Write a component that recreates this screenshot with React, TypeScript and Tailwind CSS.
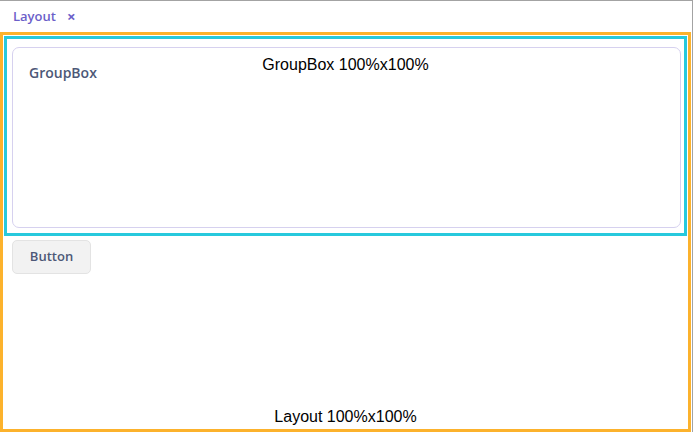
import React from "react";

export default function App() {
  return (
    <div className="w-[693px] h-[432px] bg-white border-t border-r border-[#a3a3a3] overflow-hidden" style={{ fontFamily: '"Open Sans", "Liberation Sans", sans-serif' }}>
      <div className="h-[31px] flex items-center pl-[13px] text-[13px] font-semibold text-[#6c5fc9]">
        <span>Layout</span>
        <span className="ml-[11px] text-[15px] leading-none font-bold">×</span>
      </div>
      <div className="relative w-[691px] h-[400px] border-[3px] border-[#fcb22c] p-[1px] flex flex-col">
        <div className="relative h-[200px] border-[3px] border-[#27c9dd] pt-[8px] pl-[5px] pr-[3px] pb-[5px] flex">
          <div className="flex-1 border border-[#d6d1ef] rounded-[7px] pt-[15px] pl-[16px]">
            <div className="text-[14px] font-semibold text-[#4d5877] leading-[20px]">GroupBox</div>
          </div>
          <div
            className="absolute left-0 right-0 top-[17px] text-center text-[16px] leading-[18px] text-black"
            style={{ fontFamily: '"Liberation Sans", Arial, sans-serif' }}
          >
            GroupBox 100%x100%
          </div>
        </div>
        <div className="mt-[4px] ml-[8px]">
          <button className="w-[79px] h-[34px] bg-[#f2f2f2] border border-[#e3e3e3] rounded-[5px] text-[13px] font-semibold text-[#4d5877]">
            Button
          </button>
        </div>
        <div
          className="absolute left-0 right-0 bottom-[3px] text-center text-[16px] leading-[18px] text-black"
          style={{ fontFamily: '"Liberation Sans", Arial, sans-serif' }}
        >
          Layout 100%x100%
        </div>
      </div>
    </div>
  );
}
